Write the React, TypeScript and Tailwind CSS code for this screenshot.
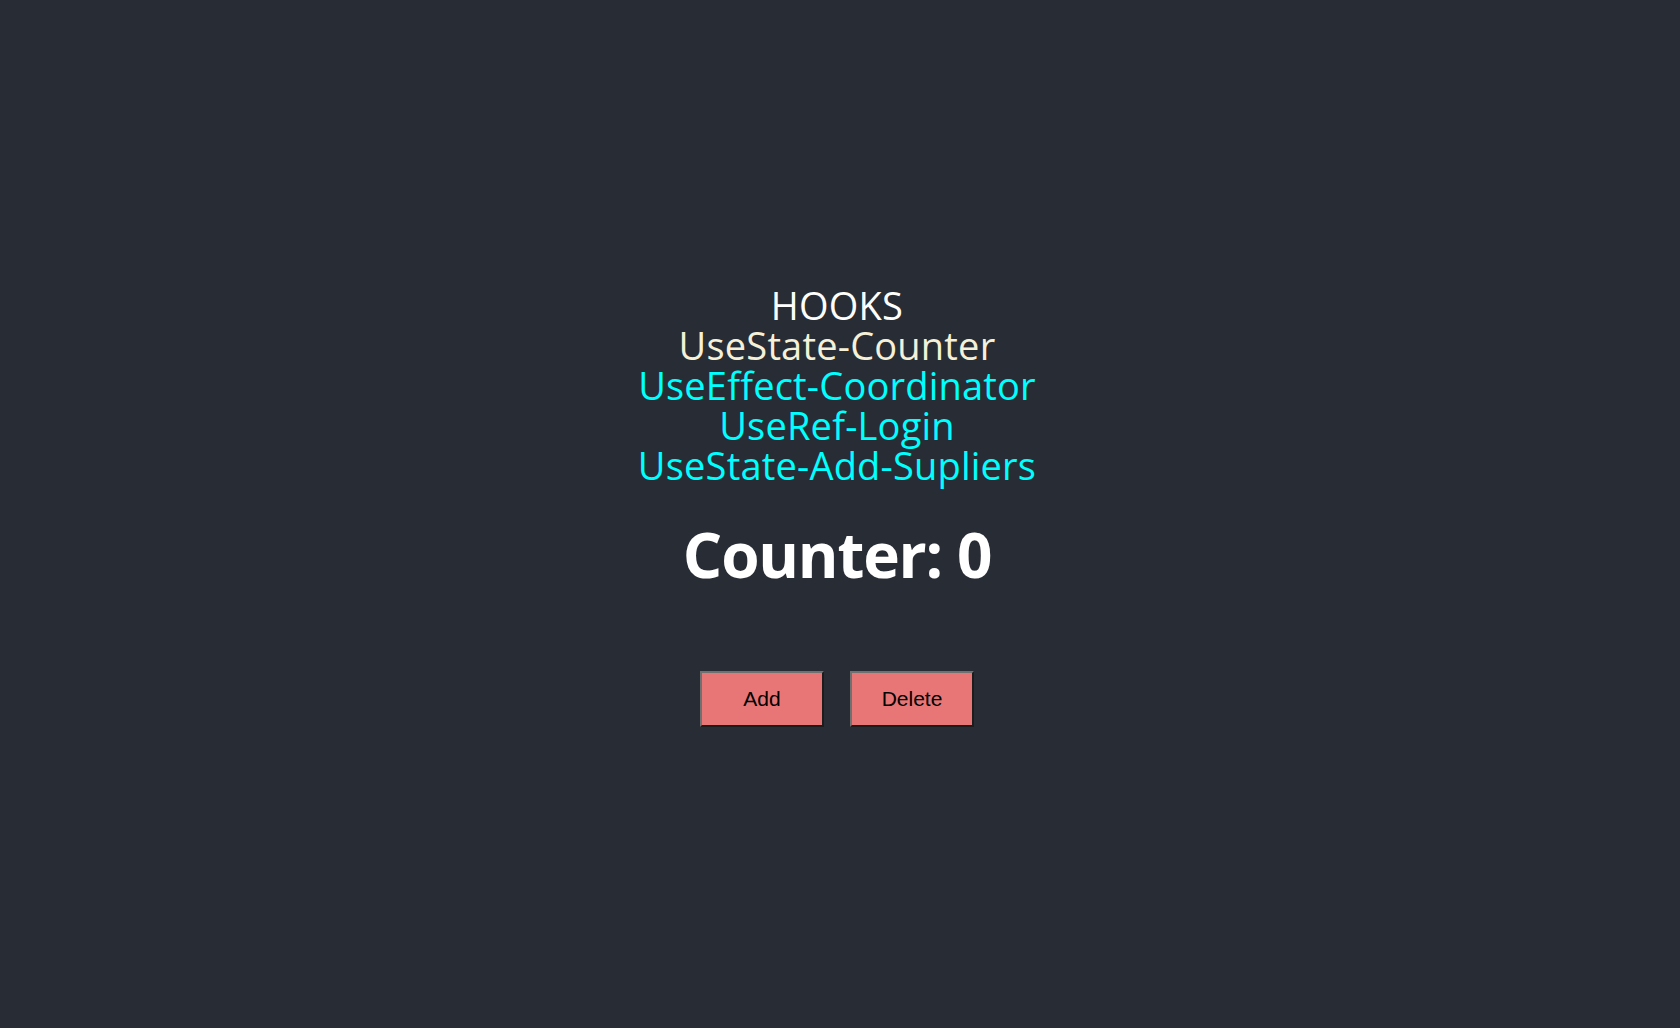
import { useState } from 'react';

export default function App() {
  const [count, setCount] = useState(0);

  return (
    <div className="min-h-screen bg-[#282c34] flex flex-col items-center pt-[285px] pr-[6px] font-['Open_Sans',sans-serif]">
      {/* Hooks nav */}
      <nav className="flex flex-col items-center text-[38px] leading-[40px] tracking-[0.2px]">
        <span className="text-white">HOOKS</span>
        <a className="text-[#f5f0d8]" href="#">UseState-Counter</a>
        <a className="text-[#00ffff]" href="#">UseEffect-Coordinator</a>
        <a className="text-[#00ffff]" href="#">UseRef-Login</a>
        <a className="text-[#00ffff]" href="#">UseState-Add-Supliers</a>
      </nav>

      <h1 className="mt-[29px] text-white font-bold text-[62px] leading-[80px] tracking-[-1.2px]">
        Counter: {count}
      </h1>

      <div className="mt-[77px] flex gap-[26px] font-['Liberation_Sans',Arial,sans-serif]">
        <button
          onClick={() => setCount(count + 1)}
          className="w-[124px] h-[56px] bg-[#e97676] text-[21px] text-black border-2 border-t-[#707070] border-l-[#707070] border-b-[#1c1c1c] border-r-[#1c1c1c]"
        >
          Add
        </button>
        <button
          onClick={() => setCount(count - 1)}
          className="w-[124px] h-[56px] bg-[#e97676] text-[21px] text-black border-2 border-t-[#707070] border-l-[#707070] border-b-[#1c1c1c] border-r-[#1c1c1c]"
        >
          Delete
        </button>
      </div>
    </div>
  );
}
